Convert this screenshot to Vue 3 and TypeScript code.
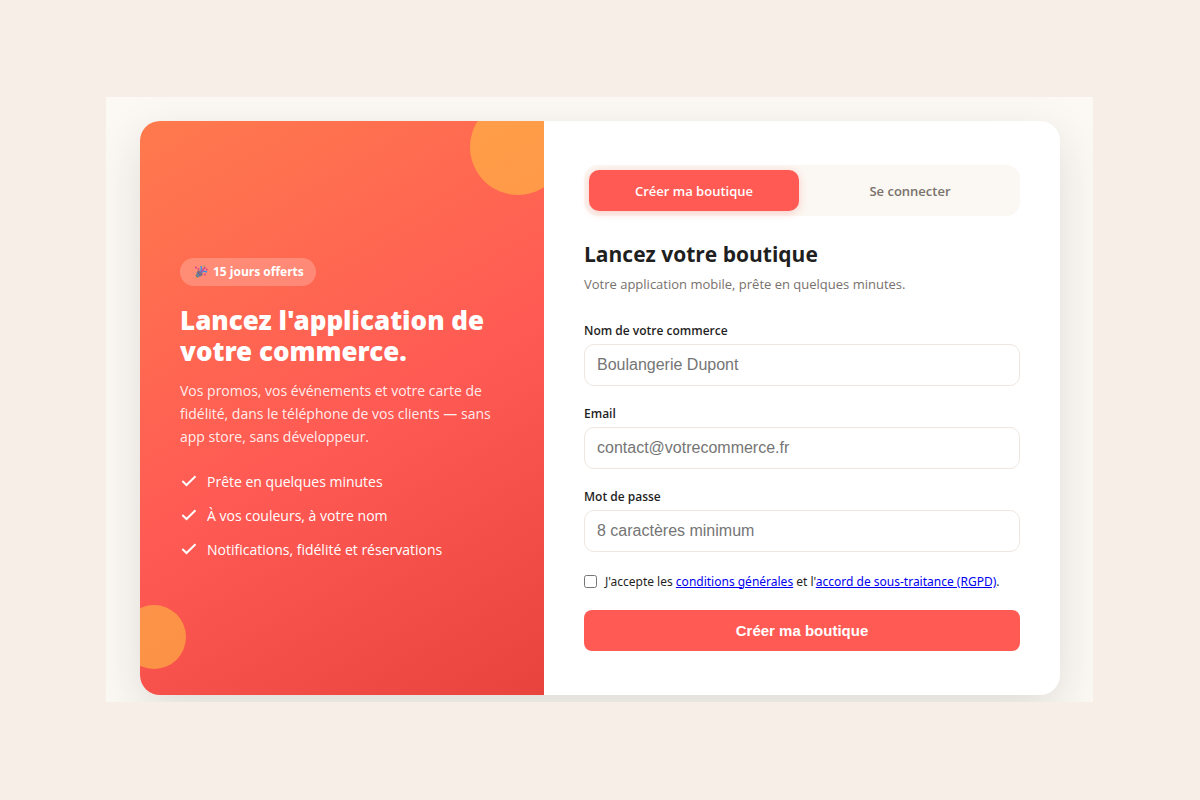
<script setup lang="ts">
import { ref } from 'vue'

type Mode = 'signup' | 'login'

interface Field {
  id: string
  label: string
  type: string
  placeholder: string
}

const mode = ref<Mode>('signup')
const accepted = ref(false)
const values = ref<Record<string, string>>({ shop: '', email: '', password: '' })

const tabs: { id: Mode; label: string }[] = [
  { id: 'signup', label: 'Créer ma boutique' },
  { id: 'login', label: 'Se connecter' },
]

const benefits: string[] = [
  'Prête en quelques minutes',
  'À vos couleurs, à votre nom',
  'Notifications, fidélité et réservations',
]

const fields: Field[] = [
  { id: 'shop', label: 'Nom de votre commerce', type: 'text', placeholder: 'Boulangerie Dupont' },
  { id: 'email', label: 'Email', type: 'email', placeholder: 'contact@votrecommerce.fr' },
  { id: 'password', label: 'Mot de passe', type: 'password', placeholder: '8 caractères minimum' },
]
</script>

<template>
  <main class="page">
    <div class="stage">
      <div class="card">
        <section class="promo">
          <span class="bubble bubble-top" aria-hidden="true"></span>
          <span class="bubble bubble-bottom" aria-hidden="true"></span>
          <p class="pill">
            <svg class="party" viewBox="0 0 14 14" aria-hidden="true">
              <path d="M3.500 5.500 8.500 10.500 1 13.500Z" fill="#d99a4a" />
              <path d="M2.800 7.500 6.500 11.300M2 9.800 4.500 12.200" stroke="#3b6fb5" stroke-width="1.4" />
              <ellipse cx="6" cy="8" rx="1.400" ry="3.400" transform="rotate(-45 6 8)" fill="#7d6a80" />
              <path d="M6.500 7C8 5 7.700 3.200 7 1" fill="none" stroke="#3b8fe0" stroke-width="1.400" />
              <path d="M7.500 7.500C9 6 11 6 13 7" fill="none" stroke="#3b8fe0" stroke-width="1.400" />
              <path d="M7.300 6.800 11.500 2" fill="none" stroke="#d8408c" stroke-width="1.400" />
              <circle cx="2" cy="2.500" r="1" fill="#d8408c" />
              <circle cx="4.500" cy="4" r="0.900" fill="#d8408c" />
              <circle cx="10" cy="1" r="0.700" fill="#5cb55b" />
              <circle cx="12.800" cy="4.500" r="0.900" fill="#d8408c" />
              <circle cx="11" cy="9.500" r="0.900" fill="#d8408c" />
            </svg>
            15 jours offerts
          </p>
          <h1>Lancez l'application de votre commerce.</h1>
          <p class="lead">
            Vos promos, vos événements et votre carte de fidélité, dans le téléphone de vos clients — sans
            app store, sans développeur.
          </p>
          <ul class="benefits">
            <li v-for="benefit in benefits" :key="benefit">
              <svg viewBox="0 0 18 18" aria-hidden="true">
                <path d="M2.300 8 6.500 12 15.500 3.200" />
              </svg>
              {{ benefit }}
            </li>
          </ul>
        </section>

        <section class="panel">
          <div class="tabs" role="tablist">
            <button
              v-for="tab in tabs"
              :key="tab.id"
              type="button"
              role="tab"
              class="tab"
              :class="{ active: mode === tab.id }"
              :aria-selected="mode === tab.id"
              @click="mode = tab.id"
            >
              {{ tab.label }}
            </button>
          </div>

          <h2>Lancez votre boutique</h2>
          <p class="subtitle">Votre application mobile, prête en quelques minutes.</p>

          <form class="form" @submit.prevent>
            <div v-for="field in fields" :key="field.id" class="field">
              <label :for="field.id">{{ field.label }}</label>
              <input
                :id="field.id"
                v-model="values[field.id]"
                :type="field.type"
                :placeholder="field.placeholder"
              />
            </div>
            <div class="consent">
              <input id="consent" v-model="accepted" type="checkbox" />
              <label for="consent">
                J'accepte les <a href="#conditions">conditions générales</a> et
                l'<a href="#rgpd">accord de sous-traitance (RGPD)</a>.
              </label>
            </div>
            <button type="submit" class="submit">Créer ma boutique</button>
          </form>
        </section>
      </div>
    </div>
  </main>
</template>

<style>
body {
  margin: 0;
  background: #f7eee8;
}
</style>

<style scoped>
*,
*::before,
*::after {
  box-sizing: border-box;
}

h1,
h2,
p,
ul {
  margin: 0;
  padding: 0;
}

.page {
  display: flex;
  align-items: center;
  min-height: 100vh;
  padding: 24px 107px 26px 106px;
  background: #f7eee8;
  color: #1f1f1f;
  font-family: 'Segoe UI', 'Open Sans', 'Noto Sans', sans-serif;
}

.stage {
  flex: 1;
  min-width: 0;
  padding: 24px 33px 7px 34px;
  overflow: hidden;
  background: #fcf9f4;
}

.card {
  display: grid;
  grid-template-columns: 101fr 129fr;
  overflow: hidden;
  border-radius: 20px;
  background: #fff;
  box-shadow: 0 16px 48px rgba(32, 28, 30, 0.13);
}

.promo {
  position: relative;
  display: flex;
  flex-direction: column;
  align-items: flex-start;
  justify-content: center;
  padding: 43px 40px 40px;
  overflow: hidden;
  background: linear-gradient(150deg, #ff7a4d 0%, #ff5a54 53%, #e8433d 100%);
  color: #fff;
}

.bubble {
  position: absolute;
  border-radius: 50%;
  background: rgba(255, 198, 65, 0.55);
}

.bubble-top {
  top: -22px;
  right: -22px;
  width: 96px;
  height: 96px;
}

.bubble-bottom {
  bottom: 26px;
  left: -18px;
  width: 64px;
  height: 64px;
}

.pill {
  display: flex;
  align-items: center;
  gap: 5px;
  padding: 0 12px 0 14px;
  border-radius: 14px;
  background: rgba(255, 255, 255, 0.22);
  font-size: 12px;
  font-weight: 700;
  line-height: 28px;
}

.party {
  width: 14px;
  height: 14px;
}

h1 {
  margin-top: 19px;
  font-family: 'Segoe UI', 'Noto Sans', 'Open Sans', sans-serif;
  font-size: 26px;
  font-weight: 900;
  line-height: 31px;
}

.lead {
  margin-top: 12px;
  color: rgba(255, 255, 255, 0.9);
  font-size: 14px;
  line-height: 23px;
}

.benefits {
  display: grid;
  gap: 12px;
  margin-top: 23px;
  list-style: none;
}

.benefits li {
  display: flex;
  align-items: center;
  gap: 9px;
  font-size: 14px;
  line-height: 22px;
}

.benefits svg {
  width: 18px;
  height: 18px;
  fill: none;
  stroke: #fff;
  stroke-width: 2;
}

.panel {
  min-width: 0;
  padding: 44px 40px;
}

.tabs {
  display: grid;
  grid-template-columns: 1fr 1fr;
  gap: 6px;
  padding: 5px;
  border-radius: 14px;
  background: #fbf7f2;
}

.tab {
  padding: 1px 0 0;
  border: 0;
  border-radius: 10px;
  background: transparent;
  color: #78716c;
  font: inherit;
  font-size: 13px;
  font-weight: 600;
  line-height: 40px;
  cursor: pointer;
}

.tab.active {
  background: #ff5a54;
  box-shadow: 0 2px 8px rgba(255, 90, 84, 0.28);
  color: #fff;
}

h2 {
  margin-top: 23px;
  font-size: 21px;
  font-weight: 700;
  line-height: 30px;
}

.subtitle {
  margin-top: 5px;
  color: #78716c;
  font-size: 13px;
  line-height: 20px;
}

.form {
  display: grid;
  gap: 18px;
  margin-top: 27px;
}

.field {
  display: grid;
  gap: 3px;
}

.field label {
  font-size: 12px;
  font-weight: 600;
  line-height: 20px;
}

.field input {
  width: 100%;
  height: 42px;
  padding: 0 12px;
  border: 1px solid #ede7e0;
  border-radius: 10px;
  background: #fff;
  color: #1f1f1f;
  font-family: 'Liberation Sans', Arial, sans-serif;
  font-size: 16px;
}

.field input::placeholder {
  color: #757575;
}

.consent {
  display: flex;
  align-items: center;
  gap: 8px;
  margin-top: 2px;
  font-family: 'Segoe UI', 'Noto Sans', 'Open Sans', sans-serif;
  font-size: 12px;
  line-height: 20px;
}

.consent input {
  flex: none;
  width: 13px;
  height: 13px;
  margin: 0;
}

.consent a {
  color: #0000ee;
}

.submit {
  padding: 0;
  border: 0;
  border-radius: 8px;
  background: #ff5a54;
  color: #fff;
  font-family: 'Liberation Sans', Arial, sans-serif;
  font-size: 15px;
  font-weight: 700;
  line-height: 41px;
  cursor: pointer;
}
</style>
